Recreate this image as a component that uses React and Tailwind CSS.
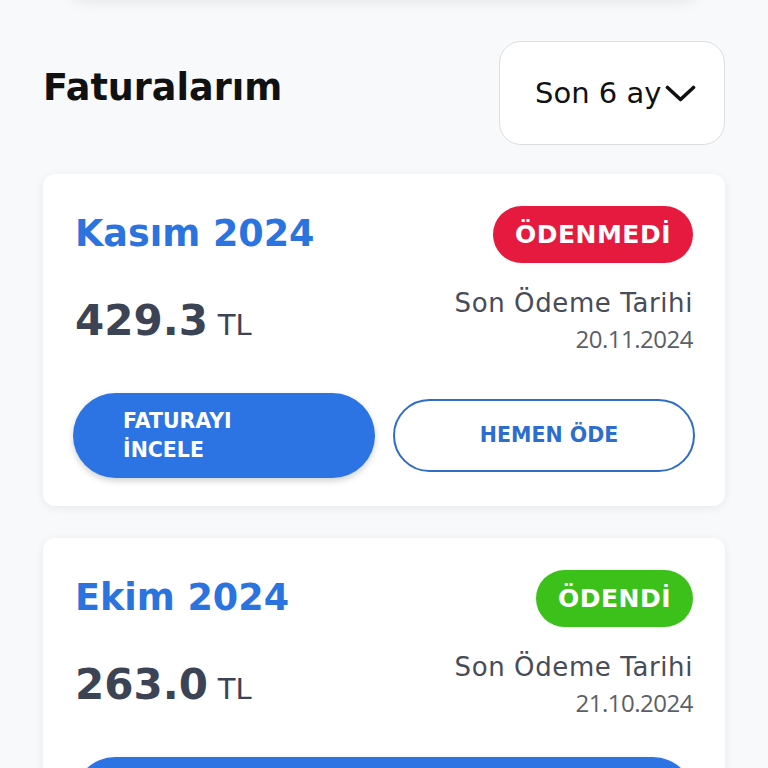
import { useState } from 'react';

const bills = [
  {
    month: 'Kasım 2024',
    amount: '429.3',
    due: '20.11.2024',
    paid: false,
  },
  {
    month: 'Ekim 2024',
    amount: '263.0',
    due: '21.10.2024',
    paid: true,
  },
];

function Chevron() {
  return (
    <svg width="31" height="17" viewBox="0 0 31 17" fill="none">
      <polyline
        points="2.5,2.5 15.5,14.5 28.5,2.5"
        stroke="#111111"
        strokeWidth="3.6"
        strokeLinecap="round"
        strokeLinejoin="round"
      />
    </svg>
  );
}

function BillCard({ bill }) {
  return (
    <div className="bg-white rounded-[12px] shadow-[0_2px_10px_rgba(0,0,0,0.07)] px-[30px] pt-[32px] pb-[28px]">
      <div className="flex items-center justify-between h-[57px]">
        <span className="ml-[2px] font-['DejaVu_Sans',sans-serif] font-bold text-[36.5px] leading-none text-[#2b73de]">
          {bill.month}
        </span>
        {bill.paid ? (
          <span className="mr-[2px] h-[57px] px-[22px] rounded-full bg-[#3cc11b] text-white flex items-center font-['DejaVu_Sans',sans-serif] font-bold text-[25px] tracking-[0.5px]">
            ÖDENDİ
          </span>
        ) : (
          <span className="mr-[2px] h-[57px] px-[22px] rounded-full bg-[#e51a3e] text-white flex items-center font-['DejaVu_Sans',sans-serif] font-bold text-[25px] tracking-[0.5px]">
            ÖDENMEDİ
          </span>
        )}
      </div>

      <div className="mt-[23px] flex items-center justify-between h-[69px]">
        <div className="ml-[2px] flex items-baseline text-[#3b4354] font-['DejaVu_Sans',sans-serif]">
          <span className="font-bold text-[42px] leading-none">{bill.amount}</span>
          <span className="ml-[10px] text-[29px] leading-none">TL</span>
        </div>
        <div className="mr-[2px] text-right">
          <div className="font-['DejaVu_Sans',sans-serif] text-[26px] leading-[35px] tracking-[0.6px] text-[#484c56]">
            Son Ödeme Tarihi
          </div>
          <div className="font-['Open_Sans',sans-serif] text-[24px] leading-[35px] tracking-[-0.5px] text-[#5b5f68]">
            {bill.due}
          </div>
        </div>
      </div>

      <div className="mt-[38px] flex items-center justify-between gap-[18px]">
        <button
          className={
            bill.paid
              ? 'flex-1 h-[85px] rounded-full bg-[#2c74e3] shadow-[0_3px_6px_rgba(0,0,0,0.18)] text-white text-left pl-[50px] font-["DejaVu_Sans",sans-serif] font-bold text-[20.5px] leading-[29px]'
              : 'w-[302px] h-[85px] rounded-full bg-[#2c74e3] shadow-[0_3px_6px_rgba(0,0,0,0.18)] text-white text-left pl-[50px] font-["DejaVu_Sans",sans-serif] font-bold text-[20.5px] leading-[29px]'
          }
        >
          FATURAYI
          <br />
          İNCELE
        </button>
        {!bill.paid && (
          <button className="w-[302px] h-[73px] rounded-full border-2 border-[#2f6cc6] bg-white text-[#2c6dcf] font-['DejaVu_Sans',sans-serif] font-bold text-[20.5px] pl-[10px]">
            HEMEN ÖDE
          </button>
        )}
      </div>
    </div>
  );
}

export default function App() {
  const [range] = useState('Son 6 ay');

  return (
    <div className="min-h-screen bg-[#f8f9fb] flex flex-col overflow-hidden">
      <div className="-mt-[86px] mx-[70px] h-[80px] bg-white rounded-[16px] shadow-[0_6px_16px_rgba(0,0,0,0.10)]" />

      <div className="px-[43px] flex flex-col">
        <div className="mt-[47px] flex items-center justify-between">
          <h1 className="mb-[10px] font-['DejaVu_Sans',sans-serif] font-bold text-[36.5px] leading-none text-[#111111]">
            Faturalarım
          </h1>
          <button className="w-[226px] h-[104px] rounded-[22px] border-[1.5px] border-[#dedede] bg-white flex items-center pl-[35px] gap-[4px]">
            <span className="font-['DejaVu_Sans',sans-serif] text-[29px] leading-none text-[#111111]">
              {range}
            </span>
            <Chevron />
          </button>
        </div>

        <div className="mt-[29px] flex flex-col gap-[32px] pb-10">
          {bills.map((b) => (
            <BillCard key={b.month} bill={b} />
          ))}
        </div>
      </div>
    </div>
  );
}
